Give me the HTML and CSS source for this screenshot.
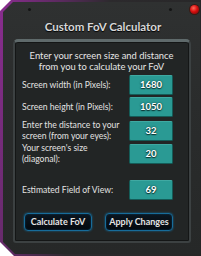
FILE: index.html
```html
<!DOCTYPE html>
<html>
<head>
<meta charset="utf-8">
<link rel="stylesheet" href="styles.css">
</head>
<body>
<div class="frame">
  <div class="window">
    <span class="rivet rivet-l"></span>
    <span class="rivet rivet-r"></span>
    <span class="led"></span>
    <div class="title">Custom FoV Calculator</div>
    <div class="panel">
      <div class="intro">Enter your screen size and distance<br>from you to calculate your FoV</div>
      <div class="row r1"><div class="label">Screen width (in Pixels):</div><div class="box">1680</div></div>
      <div class="row r2"><div class="label">Screen height (in Pixels):</div><div class="box">1050</div></div>
      <div class="row r3"><div class="label">Enter the distance to your<br>screen (from your eyes):</div><div class="box">32</div></div>
      <div class="row r4"><div class="label">Your screen's size<br>(diagonal):</div><div class="box">20</div></div>
      <div class="row r5"><div class="label">Estimated Field of View:</div><div class="box">69</div></div>
      <div class="buttons">
        <div class="btn">Calculate FoV</div>
        <div class="btn">Apply Changes</div>
      </div>
    </div>
  </div>
</div>
</body>
</html>
```
FILE: styles.css
```css
html, body {
  margin: 0;
  padding: 0;
  width: 201px;
  height: 256px;
  background: #ffffff;
  overflow: hidden;
  font-family: Lato, "Liberation Sans", sans-serif;
}
.frame {
  width: 201px;
  height: 256px;
  box-sizing: border-box;
  padding: 2px 1px 2px 3px;
  background: linear-gradient(100deg, #8a2d90 0%, #5a2a5e 25%, #2c2a2d 45%, #262626 100%);
  clip-path: polygon(11px 0, 100% 0, 100% 100%, 14px 100%, 0 calc(100% - 14px), 0 11px);
}
.window {
  position: relative;
  height: 100%;
  box-sizing: border-box;
  background: linear-gradient(#2f3131, #2a2c2c 40%, #262828);
  clip-path: polygon(10px 0, 100% 0, 100% 100%, 12px 100%, 0 calc(100% - 12px), 0 10px);
  padding: 19px 9px 11px 10px;
  display: flex;
  flex-direction: column;
}
.rivet {
  position: absolute;
  top: 6px;
  width: 3px;
  height: 3px;
  border-radius: 50%;
  background: #141515;
}
.rivet-l { left: 25px; }
.rivet-r { left: 166px; }
.led {
  position: absolute;
  top: 3px;
  right: 1px;
  width: 9px;
  height: 9px;
  border-radius: 50%;
  background: radial-gradient(circle at 40% 35%, #ff6a5a 0%, #d80f0f 45%, #6a0505 100%);
  box-shadow: 0 0 0 1px #3a1a14;
}
.title {
  height: 18px;
  text-align: center;
  font-weight: bold;
  font-size: 11.5px;
  line-height: 12px;
  color: #d8d8d8;
  text-shadow: 0 1px 1px #000;
  padding-left: 2px;
}
.panel {
  flex: 1;
  background: #222525;
  border: 2px solid #3c4142;
  border-top: 3px solid #5f6a6b;
  border-radius: 5px 5px 3px 3px;
  padding: 8px 16px 0 7px;
  box-shadow: inset 0 0 0 1px #141616;
}
.intro {
  text-align: center;
  color: #e6e6e6;
  font-size: 9.4px;
  line-height: 11px;
  margin-left: -4px;
  margin-right: -12px;
  margin-bottom: 3px;
}
.row {
  display: flex;
  justify-content: space-between;
  align-items: center;
}
.label {
  color: #e2e2e2;
  font-size: 8.6px;
  line-height: 11px;
}
.box {
  width: 44px;
  height: 20px;
  box-sizing: border-box;
  background: #2a9a94;
  border: 1px solid #145c58;
  border-top-color: #3fa9a2;
  border-radius: 2px;
  color: #ffffff;
  font-weight: bold;
  font-size: 9.5px;
  text-align: center;
  line-height: 18px;
  text-shadow: 0 1px 1px #0b3331, 0 0 2px #0b3331;
}
.r1 { margin-bottom: 2px; }
.r2 { margin-bottom: 3px; }
.r3 { margin-bottom: 1px; }
.r4 { margin-bottom: 15px; }
.buttons {
  display: flex;
  gap: 13px;
  margin-top: 13px;
  margin-left: 2px;
}
.btn {
  width: 69px;
  height: 18px;
  box-sizing: border-box;
  border: 1px solid #176c9a;
  border-radius: 4px;
  background: linear-gradient(#0b1620, #04080d);
  box-shadow: 0 0 2px #14709f, inset 0 0 2px #0d3f60;
  color: #e4e4e4;
  font-weight: bold;
  font-size: 9px;
  line-height: 16px;
  text-align: center;
}
```
